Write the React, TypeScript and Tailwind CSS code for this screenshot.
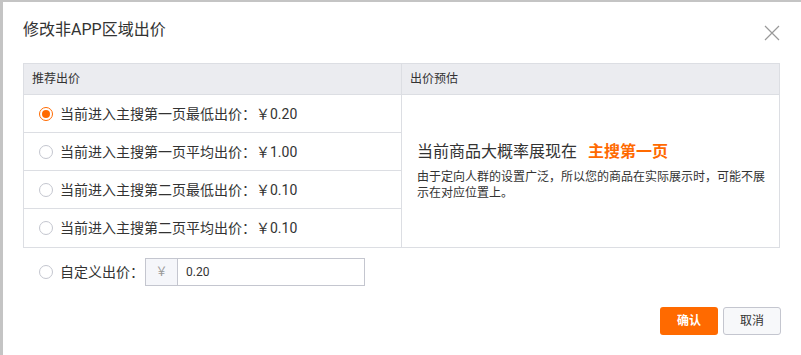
import React from 'react';

const options = [
  { label: '当前进入主搜第一页最低出价：', price: '￥0.20', checked: true },
  { label: '当前进入主搜第一页平均出价：', price: '￥1.00', checked: false },
  { label: '当前进入主搜第二页最低出价：', price: '￥0.10', checked: false },
  { label: '当前进入主搜第二页平均出价：', price: '￥0.10', checked: false },
];

function Radio({ checked }: { checked: boolean }) {
  return checked ? (
    <span className="w-[14px] h-[14px] rounded-full border-[1.5px] border-[#ff6a00] bg-white flex items-center justify-center shrink-0">
      <span className="w-[8px] h-[8px] rounded-full bg-[#ff6a00]" />
    </span>
  ) : (
    <span className="w-[14px] h-[14px] rounded-full border border-[#c4c6cf] bg-white shrink-0" />
  );
}

export default function App() {
  return (
    <div
      className="w-[801px] h-[355px] bg-[#c4c4c4] pt-[2px] pl-[3px] overflow-hidden [text-spacing-trim:space-all]"
      style={{ fontFamily: 'Roboto, "Noto Sans CJK SC", sans-serif' }}
    >
      <div className="w-full h-full bg-white relative text-[#333]">
        {/* header */}
        <div className="flex items-center justify-between pl-[20px] pr-[20px] h-[61px] pb-[2px]">
          <h2 className="text-[16px] leading-[20px] text-[#333] mb-[3px]">修改非APP区域出价</h2>
          <svg width="16" height="16" viewBox="0 0 16 16" className="mr-[1px] mt-[2px]">
            <path d="M1 1 L15 15 M15 1 L1 15" stroke="#999" strokeWidth="1.2" fill="none" />
          </svg>
        </div>

        {/* table */}
        <div className="ml-[20px] w-[757px] border border-[#dcdee3] flex">
          <div className="w-[378px] border-r border-[#dcdee3] flex flex-col">
            <div className="h-[31px] bg-[#ebecf0] border-b border-[#dcdee3] flex items-center pl-[8px] text-[12px] text-[#333]">
              推荐出价
            </div>
            {options.map((o, i) => (
              <div
                key={i}
                className={`h-[38px] flex items-center pl-[15px] gap-[7px] text-[14px] ${i < options.length - 1 ? 'border-b border-[#dcdee3]' : ''}`}
              >
                <Radio checked={o.checked} />
                <span className="leading-[20px]">
                  {o.label}
                  {o.price}
                </span>
              </div>
            ))}
          </div>
          <div className="flex-1 flex flex-col">
            <div className="h-[31px] bg-[#ebecf0] border-b border-[#dcdee3] flex items-center pl-[8px] text-[12px] text-[#333]">
              出价预估
            </div>
            <div className="flex-1 flex flex-col justify-center pl-[15px] pr-[10px] pt-[1px] pb-[2px]">
              <div className="text-[16px] leading-[22px]">
                当前商品大概率展现在<span className="ml-[11px] text-[#ff6a00] font-bold">主搜第一页</span>
              </div>
              <p className="text-[12px] leading-[16px] mt-[6px] text-[#333]">
                由于定向人群的设置广泛，所以您的商品在实际展示时，可能不展示在对应位置上。
              </p>
            </div>
          </div>
        </div>

        {/* custom */}
        <div className="ml-[36px] mt-[10px] flex items-center gap-[7px] text-[14px]">
          <Radio checked={false} />
          <span>自定义出价：</span>
          <div className="ml-[-6px] flex h-[28px] w-[220px] border border-[#c4c6cf]">
            <span className="w-[32px] bg-[#f5f6fa] border-r border-[#c4c6cf] flex items-center justify-center text-[12px] text-[#999]">
              ￥
            </span>
            <span className="flex items-center pl-[8px] text-[12px] text-[#333]">0.20</span>
          </div>
        </div>

        {/* footer */}
        <div className="flex justify-end gap-[5px] pr-[20px] mt-[21px]">
          <button className="w-[58px] h-[28px] rounded-[3px] bg-[#ff6a00] text-white text-[12px] font-bold">
            确认
          </button>
          <button className="w-[58px] h-[28px] rounded-[3px] bg-[#f7f8fa] border border-[#c4c6cf] text-[12px] text-[#333]">
            取消
          </button>
        </div>
      </div>
    </div>
  );
}
